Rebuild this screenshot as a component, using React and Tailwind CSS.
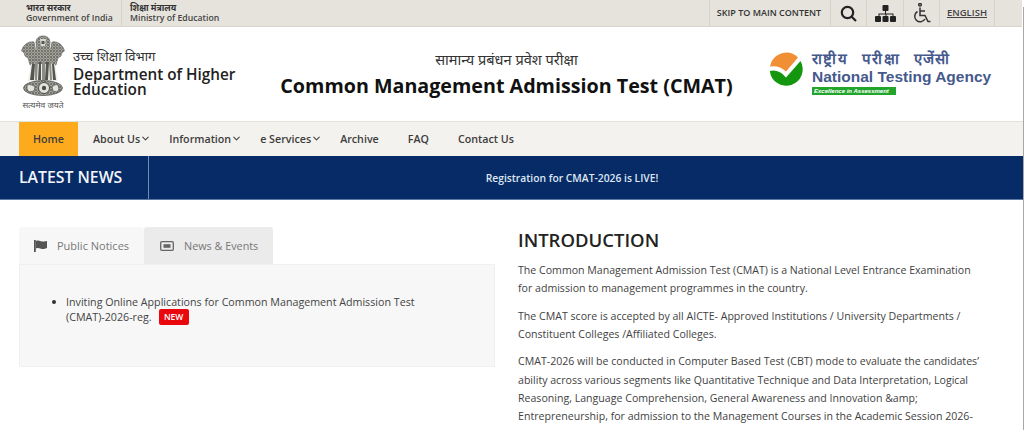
import React from "react";
import { ChevronDown } from "lucide-react";

const F = { fontFamily: '"Open Sans", "Noto Sans", sans-serif' };

function Emblem() {
  return (
    <svg width="46" height="78" viewBox="0 0 46 78" className="shrink-0">
      <defs>
        <pattern id="tex" width="3" height="3" patternUnits="userSpaceOnUse">
          <rect width="3" height="3" fill="#a3a39b" />
          <circle cx="1" cy="1" r="0.9" fill="#5f5f58" />
          <circle cx="2.500" cy="2.500" r="0.5" fill="#77776f" />
        </pattern>
      </defs>
      <path d="M16 8c0-5 3-7 7-7s7 2 7 7l-1 7H17z" fill="url(#tex)" stroke="#666" strokeWidth=".7" />
      <path d="M20 4h6l-1 7h-4z" fill="#d8d8d2" />
      <path d="M21.500 6h3v3h-3z" fill="#555" />
      <path d="M14 7C8 6 3 10 1.500 16c2 1 3 2 3.500 5l3 2 2 7h4l2-13z" fill="url(#tex)" stroke="#666" strokeWidth=".6" />
      <path d="M32 7c6-1 11 3 12.500 9-2 1-3 2-3.500 5l-3 2-2 7h-4l-2-13z" fill="url(#tex)" stroke="#666" strokeWidth=".6" />
      <path d="M15 14h16v16H15z" fill="url(#tex)" />
      <path d="M11 29h24l3 17H8z" fill="#efefeb" />
      <path d="M12 29l-2 16h4l1-16zM19 27l-1 18h3V27zM26 27l-1 18h3l1-18zM32 29l1 16h3l-2-16z" fill="#55554f" />
      <path d="M15 27h3l-1 18h-2zM22 27h3v18h-3zM29 27h2l1 18h-2z" fill="#8c8c85" />
      <ellipse cx="23" cy="53" rx="19.500" ry="7.500" fill="url(#tex)" stroke="#555" strokeWidth=".8" />
      <circle cx="24" cy="53" r="5.500" fill="#e4e4df" stroke="#4d4d47" strokeWidth="1" />
      <circle cx="24" cy="53" r="2.200" fill="#4d4d47" />
      <path d="M7 50c3-1 6 0 8 2l-1 4-5 1-2-3z" fill="#e4e4df" stroke="#4d4d47" strokeWidth=".7" />
      <path d="M38 50c-2-1-4 0-6 2l1 4 4 1 2-3z" fill="#e4e4df" stroke="#4d4d47" strokeWidth=".7" />
      <text x="23" y="73" textAnchor="middle" fontSize="8.500" fill="#555" fontFamily='"Noto Sans", sans-serif'>सत्यमेव जयते</text>
    </svg>
  );
}

function NtaMark() {
  return (
    <svg width="34" height="34" viewBox="0 0 34 34" className="shrink-0">
      <path d="M1 14.500A16.500 16.500 0 0 1 29 5.500L17 19.500Q10 13 1 14.500z" fill="#f08f33" />
      <path d="M.8 19Q10 17 17 25.500L31.500 9A16.500 16.500 0 1 1 .8 19z" fill="#15960f" />
    </svg>
  );
}

function Nav({ children, caret, className = "" }) {
  return (
    <span className={`flex items-center text-[10.700px] font-semibold text-[#3d3d3d] whitespace-nowrap ${className}`}>
      {children}
      {caret && <ChevronDown size={11} strokeWidth={2.200} />}
    </span>
  );
}

export default function App() {
  return (
    <div style={F} className="relative w-[1024px] h-[430px] overflow-hidden bg-white">
      <div className="absolute right-0 top-[7px] bottom-0 w-px bg-[#a8a8a8]" />
      <div className="h-[27px] w-[1022px] bg-[#e6e3dd] border-b border-[#d8d5cf] flex items-stretch">
        <div className="ml-[26px] w-[96px] border-r border-[#d6d3cc] flex flex-col justify-center leading-[10px] text-[8.700px] font-semibold text-[#444] whitespace-nowrap">
          <span className="font-bold text-[#333]">भारत सरकार</span>
          <span>Government of India</span>
        </div>
        <div className="ml-[8px] flex flex-col justify-center leading-[10px] text-[8.700px] font-semibold text-[#444] whitespace-nowrap">
          <span className="font-bold text-[#333]">शिक्षा मंत्रालय</span>
          <span>Ministry of Education</span>
        </div>
        <div className="ml-auto mr-[27px] flex items-stretch">
          <div className="w-[122px] border-x border-[#d6d3cc] flex items-center justify-center pr-[2px] text-[9px] font-semibold text-[#333]">SKIP TO MAIN CONTENT</div>
          <div className="w-[36px] border-r border-[#d6d3cc] flex items-center justify-center">
            <svg width="17" height="17" viewBox="0 0 17 17" fill="none" stroke="#222" strokeWidth="2.200"><circle cx="7.500" cy="7.500" r="5.700" /><path d="M11.500 11.500L16 16" /></svg>
          </div>
          <div className="w-[37px] border-r border-[#d6d3cc] flex items-center justify-center">
            <svg width="21" height="17" viewBox="0 0 21 17" fill="#222"><rect x="7.500" y="0" width="6" height="6" rx="1" /><rect x="0" y="11" width="6" height="6" rx="1" /><rect x="7.500" y="11" width="6" height="6" rx="1" /><rect x="15" y="11" width="6" height="6" rx="1" /><path d="M10 6h1v2.500h7.500V11h-1V9.500h-6V11h-1V9.500h-6V11h-1V8.500H10z" /></svg>
          </div>
          <div className="w-[36px] border-r border-[#d6d3cc] flex items-center justify-center">
            <svg width="19" height="21" viewBox="0 0 19 21" fill="none" stroke="#333" strokeWidth="1.500"><circle cx="8" cy="1.800" r="1.300" /><path d="M8 4.500v8h5l3 6h2.500" /><path d="M8 8h5" /><path d="M5.500 8.500a5.500 5.500 0 1 0 7.500 7.500" /></svg>
          </div>
          <div className="w-[55px] border-r border-[#d6d3cc] flex items-center justify-center text-[9.500px] font-semibold text-[#444] underline">ENGLISH</div>
        </div>
      </div>

      <div className="h-[95px] flex items-start border-b border-[#e4e1da]">
        <div className="ml-[20px] mt-[8px]"><Emblem /></div>
        <div className="ml-[7px] mt-[20px] w-[180px]">
          <div className="text-[13px] leading-[18px] text-[#333]">उच्च शिक्षा विभाग</div>
          <div className="mt-[2px] text-[15.300px] leading-[15px] font-semibold text-[#222]">Department of Higher Education</div>
        </div>
        <div className="ml-[21px] mt-[22px] w-[465px] text-center">
          <div className="text-[14.600px] leading-[20px] text-[#333]">सामान्य प्रबंधन प्रवेश परीक्षा</div>
          <div className="text-[19.700px] leading-[30px] mt-[2px] font-bold text-[#111] whitespace-nowrap">Common Management Admission Test (CMAT)</div>
        </div>
        <div className="ml-[30px] mt-[24px] flex items-start gap-[9px]">
          <div className="mt-[1px]"><NtaMark /></div>
          <div className="flex flex-col" style={{ fontFamily: '"Liberation Sans", sans-serif' }}>
            <span className="-mt-[1px] mb-[1px] text-[15px] leading-[17px] font-bold text-[#45598d] tracking-[1.400px] [word-spacing:8px] whitespace-nowrap">राष्ट्रीय परीक्षा एजेंसी</span>
            <span className="text-[15.500px] leading-[18px] font-bold text-[#45598d] whitespace-nowrap">National Testing Agency</span>
            <span className="mt-[1px] w-[84px] h-[8px] bg-[#22a52d] text-white text-[6px] leading-[8px] italic font-bold pl-[2px] whitespace-nowrap">Excellence in Assessment</span>
          </div>
        </div>
      </div>

      <div className="h-[34px] bg-[#f4f2ee] flex items-stretch pl-[19px]">
        <div className="w-[59px] bg-[#fdab1c] flex items-center justify-center text-[10.700px] font-semibold text-[#3d3d3d]">Home</div>
        <div className="flex items-center">
          <Nav caret className="ml-[15px]">About Us</Nav>
          <Nav caret className="ml-[18px]">Information</Nav>
          <Nav caret className="ml-[18px]">e Services</Nav>
          <Nav className="ml-[18px]">Archive</Nav>
          <Nav className="ml-[29px]">FAQ</Nav>
          <Nav className="ml-[29px]">Contact Us</Nav>
        </div>
      </div>

      <div className="h-[44px] bg-[#062b66] flex items-stretch border-b border-[#5c79a6]">
        <div className="w-[149px] border-r border-[#6e8cb8] pl-[19px] pt-[1px] flex items-center text-[15.800px] font-semibold text-[#f2f5fa]">LATEST NEWS</div>
        <div className="flex-1 flex items-center justify-center text-[10.300px] font-semibold text-[#dfe7f3] pr-[29px] pt-[2px]">Registration for CMAT-2026 is LIVE!</div>
      </div>

      <div className="flex pl-[19px] pt-[27px] gap-[23px]">
        <div className="w-[476px] shrink-0">
          <div className="flex h-[37px]">
            <div className="w-[125px] bg-[#f7f7f7] rounded-t-[3px] flex items-center pl-[15px] pt-[1px] text-[11px] text-[#777]">
              <svg width="14" height="12" viewBox="0 0 14 12" fill="#555"><rect x="0" y="0" width="1.800" height="12" /><path d="M2 1c3-1.500 4.500 1 8 .5l3-.5v7l-3 1c-3.500.5-5-2-8-.5z" /></svg>
              <span className="ml-[9px]">Public Notices</span>
            </div>
            <div className="w-[129px] bg-[#ebebeb] rounded-t-[3px] flex items-center pl-[16px] pt-[1px] text-[10.800px] text-[#777]">
              <svg width="14" height="10" viewBox="0 0 14 10" fill="none" stroke="#666" strokeWidth="1.300"><rect x=".7" y=".7" width="12.600" height="8.600" rx="1" /><rect x="3.500" y="3.200" width="7" height="3.600" fill="#666" stroke="none" /></svg>
              <span className="ml-[10px]">News &amp; Events</span>
            </div>
          </div>
          <div className="h-[103px] bg-[#f7f7f7] border border-[#f0f0f0] pl-[46px] pr-[60px] pt-[30px] relative">
            <span className="absolute left-[32px] top-[35px] w-[4px] h-[4px] rounded-full bg-[#333]" />
            <div className="text-[10.700px] leading-[15px] text-[#444]">
              Inviting Online Applications for Common Management Admission Test (CMAT)-2026-reg.
              <span className="inline-block ml-[7px] w-[30px] text-center h-[16px] leading-[16px] -translate-y-px rounded-[2px] bg-[#e8080e] text-white text-[8.500px] font-semibold align-middle">NEW</span>
            </div>
          </div>
        </div>
        <div className="w-[465px] shrink-0">
          <h1 className="text-[18.500px] leading-[26px] font-semibold text-[#222]">INTRODUCTION</h1>
          <p className="mt-[8px] text-[10.600px] leading-[18.200px] text-[#3f3f3f]">The Common Management Admission Test (CMAT) is a National Level Entrance Examination for admission to management programmes in the country.</p>
          <p className="mt-[9.500px] text-[10.600px] leading-[18.200px] text-[#3f3f3f]">The CMAT score is accepted by all AICTE- Approved Institutions / University Departments / Constituent Colleges /Affiliated Colleges.</p>
          <p className="mt-[9px] text-[10.600px] leading-[18.200px] text-[#3f3f3f]">CMAT-2026 will be conducted in Computer Based Test (CBT) mode to evaluate the candidates’ ability across various segments like Quantitative Technique and Data Interpretation, Logical Reasoning, Language Comprehension, General Awareness and Innovation &amp;amp; Entrepreneurship, for admission to the Management Courses in the Academic Session 2026-</p>
        </div>
      </div>
    </div>
  );
}
